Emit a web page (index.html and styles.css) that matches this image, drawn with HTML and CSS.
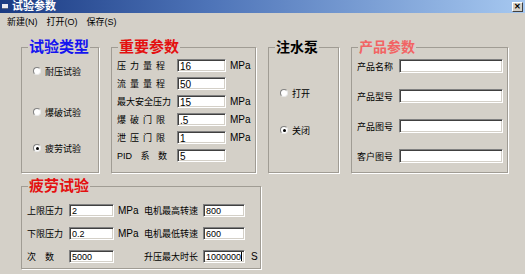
FILE: index.html
```html
<!DOCTYPE html>
<html lang="zh-CN">

<head>
  <meta charset="UTF-8">
  <title>试验参数</title>
  <link rel="stylesheet" href="styles.css">
</head>

<body>
  <div class="window">
    <header class="titlebar">
      <span class="app-icon"></span>
      <span class="title">试验参数</span>
      <span class="close-btn">✕</span>
    </header>

    <nav class="menu">
      <span>新建(N)</span>
      <span>打开(O)</span>
      <span>保存(S)</span>
    </nav>

    <main class="content">
      <div class="top-row">
        <fieldset class="group test-type">
          <legend>试验类型</legend>
          <div class="body">
            <label class="radio-item"><span class="radio"></span>耐压试验</label>
            <label class="radio-item"><span class="radio"></span>爆破试验</label>
            <label class="radio-item"><span class="radio checked"></span>疲劳试验</label>
          </div>
        </fieldset>

        <fieldset class="group main-params">
          <legend>重要参数</legend>
          <div class="body">
            <span class="spaced">压力量程</span><span class="field">16</span><span class="unit">MPa</span>
            <span class="spaced">流量量程</span><span class="field">50</span><span class="unit"></span>
            <span>最大安全压力</span><span class="field">15</span><span class="unit">MPa</span>
            <span class="spaced">爆破门限</span><span class="field">.5</span><span class="unit">MPa</span>
            <span class="spaced">泄压门限</span><span class="field">1</span><span class="unit">MPa</span>
            <span class="pid">PID 系 数</span><span class="field">5</span><span class="unit"></span>
          </div>
        </fieldset>

        <fieldset class="group pump">
          <legend>注水泵</legend>
          <div class="body">
            <label class="radio-item"><span class="radio"></span>打开</label>
            <label class="radio-item"><span class="radio checked"></span>关闭</label>
          </div>
        </fieldset>

        <fieldset class="group product">
          <legend>产品参数</legend>
          <div class="body">
            <span>产品名称</span><span class="field"></span>
            <span>产品型号</span><span class="field"></span>
            <span>产品图号</span><span class="field"></span>
            <span>客户图号</span><span class="field"></span>
          </div>
        </fieldset>
      </div>

      <fieldset class="group fatigue">
        <legend>疲劳试验</legend>
        <div class="body">
          <span>上限压力</span><span class="field">2</span><span class="unit">MPa</span>
          <span class="label-right">电机最高转速</span><span class="field">800</span><span class="unit"></span>

          <span>下限压力</span><span class="field">0.2</span><span class="unit">MPa</span>
          <span class="label-right">电机最低转速</span><span class="field">600</span><span class="unit"></span>

          <span class="spaced-wide">次数</span><span class="field">5000</span><span class="unit"></span>
          <span class="label-right">升压最大时长</span><span class="field caret">1000000</span><span class="unit">S</span>
        </div>
      </fieldset>
    </main>
  </div>
</body>

</html>
```

FILE: styles.css
```css
*,
*::before,
*::after {
  box-sizing: border-box;
}

body {
  margin: 0;
  background: #d4d0c8;
  font-family: 'Liberation Sans', 'Noto Sans CJK SC', sans-serif;
  font-size: 9px;
  color: #000;
}

.window {
  width: 525px;
  height: 274px;
  overflow: hidden;
  display: flex;
  flex-direction: column;
}

.titlebar {
  height: 13px;
  display: flex;
  align-items: center;
  padding: 0 2px;
  background: linear-gradient(to right, #1a3a82, #4e74b8 40%, #a6c8f0);
  color: #fff;

  .app-icon {
    width: 6px;
    height: 5px;
    background: #e8e8f0;
    border-bottom: 1px solid #606880;
    margin-right: 4px;
  }

  .title {
    font-size: 11px;
    font-weight: 700;
    line-height: 13px;
  }

  .close-btn {
    margin-left: auto;
    width: 11px;
    height: 10px;
    display: grid;
    place-items: center;
    font-size: 8px;
    font-weight: 700;
    line-height: 1;
    color: #000;
    background: #d4d0c8;
    border: 1px solid;
    border-color: #fff #404040 #404040 #fff;
  }
}

.menu {
  height: 17px;
  display: flex;
  align-items: center;
  gap: 9px;
  padding-left: 7px;
  font-size: 9px;
}

.content {
  display: flex;
  flex-direction: column;
  gap: 4px;
  padding: 8px 0 0 21px;
}

.top-row {
  display: flex;
  gap: 12px;
}

.group {
  margin: 0;
  padding: 0;
  min-width: 0;
  border: 1px solid #a09c94;
  box-shadow: 1px 1px 0 #fff;

  legend {
    margin-left: 6px;
    padding: 0 1px;
    font-size: 15px;
    line-height: 18px;
    font-weight: 700;
    white-space: nowrap;
  }
}

.radio-item {
  display: flex;
  align-items: center;
  gap: 4px;
  height: 12px;
}

.radio {
  width: 8px;
  height: 8px;
  border-radius: 50%;
  background: #fff;
  border: 1px solid;
  border-color: #808080 #e8e8e8 #e8e8e8 #808080;
  display: grid;
  place-items: center;

  &.checked::after {
    content: '';
    width: 3px;
    height: 3px;
    border-radius: 50%;
    background: #000;
  }
}

.field {
  height: 13px;
  background: #fff;
  border: 1px solid;
  border-color: #808080 #fff #fff #808080;
  box-shadow: inset 1px 1px #404040, inset -1px -1px #d4d0c8;
  padding: 1px 2px 0;
  font-size: 10px;
  line-height: 11px;
  white-space: nowrap;
  overflow: hidden;

  &.caret::after {
    content: '';
    display: inline-block;
    width: 1px;
    height: 9px;
    background: #000;
    vertical-align: -1px;
  }
}

.unit {
  padding-left: 4px;
  font-size: 10px;
}

.spaced {
  letter-spacing: 4px;
}

.test-type {
  width: 78px;
  height: 135px;

  legend {
    color: #1414f0;
  }

  .body {
    display: flex;
    flex-direction: column;
    gap: 29px;
    padding: 9px 0 0 11px;
  }

  .radio-item:last-child {
    margin-top: -5px;
  }
}

.main-params {
  width: 145px;
  height: 135px;

  legend {
    color: #e41010;
  }

  .body {
    display: grid;
    grid-template-columns: 60px 49px auto;
    grid-auto-rows: 18px;
    align-items: center;
    padding-left: 5px;
  }

  .pid {
    word-spacing: 6px;
  }
}

.pump {
  width: 71px;
  height: 135px;

  legend {
    font-size: 14px;
  }

  .body {
    display: flex;
    flex-direction: column;
    gap: 25px;
    padding: 31px 0 0 11px;
  }
}

.product {
  width: 157px;
  height: 135px;

  legend {
    font-size: 14px;
    color: #f26464;
  }

  .body {
    display: grid;
    grid-template-columns: 42px 104px;
    grid-auto-rows: 16px;
    row-gap: 14px;
    align-items: center;
    padding: 2px 0 0 5px;
  }

  .field {
    height: 14px;
  }
}

.fatigue {
  width: 240px;

  legend {
    color: #e41010;
  }

  .body {
    display: grid;
    grid-template-columns: 42px 45px 28px 61px 42px auto;
    grid-auto-rows: 16px;
    row-gap: 7px;
    align-items: center;
    padding: 7px 0 4px 5px;
  }

  .field {
    font-size: 9px;
    padding: 1px 1px 0 2px;
  }

  .label-right {
    text-align: right;
    padding-right: 5px;
  }

  .spaced-wide {
    letter-spacing: 9px;
  }

  .unit:last-child {
    padding-left: 6px;
  }
}
```
